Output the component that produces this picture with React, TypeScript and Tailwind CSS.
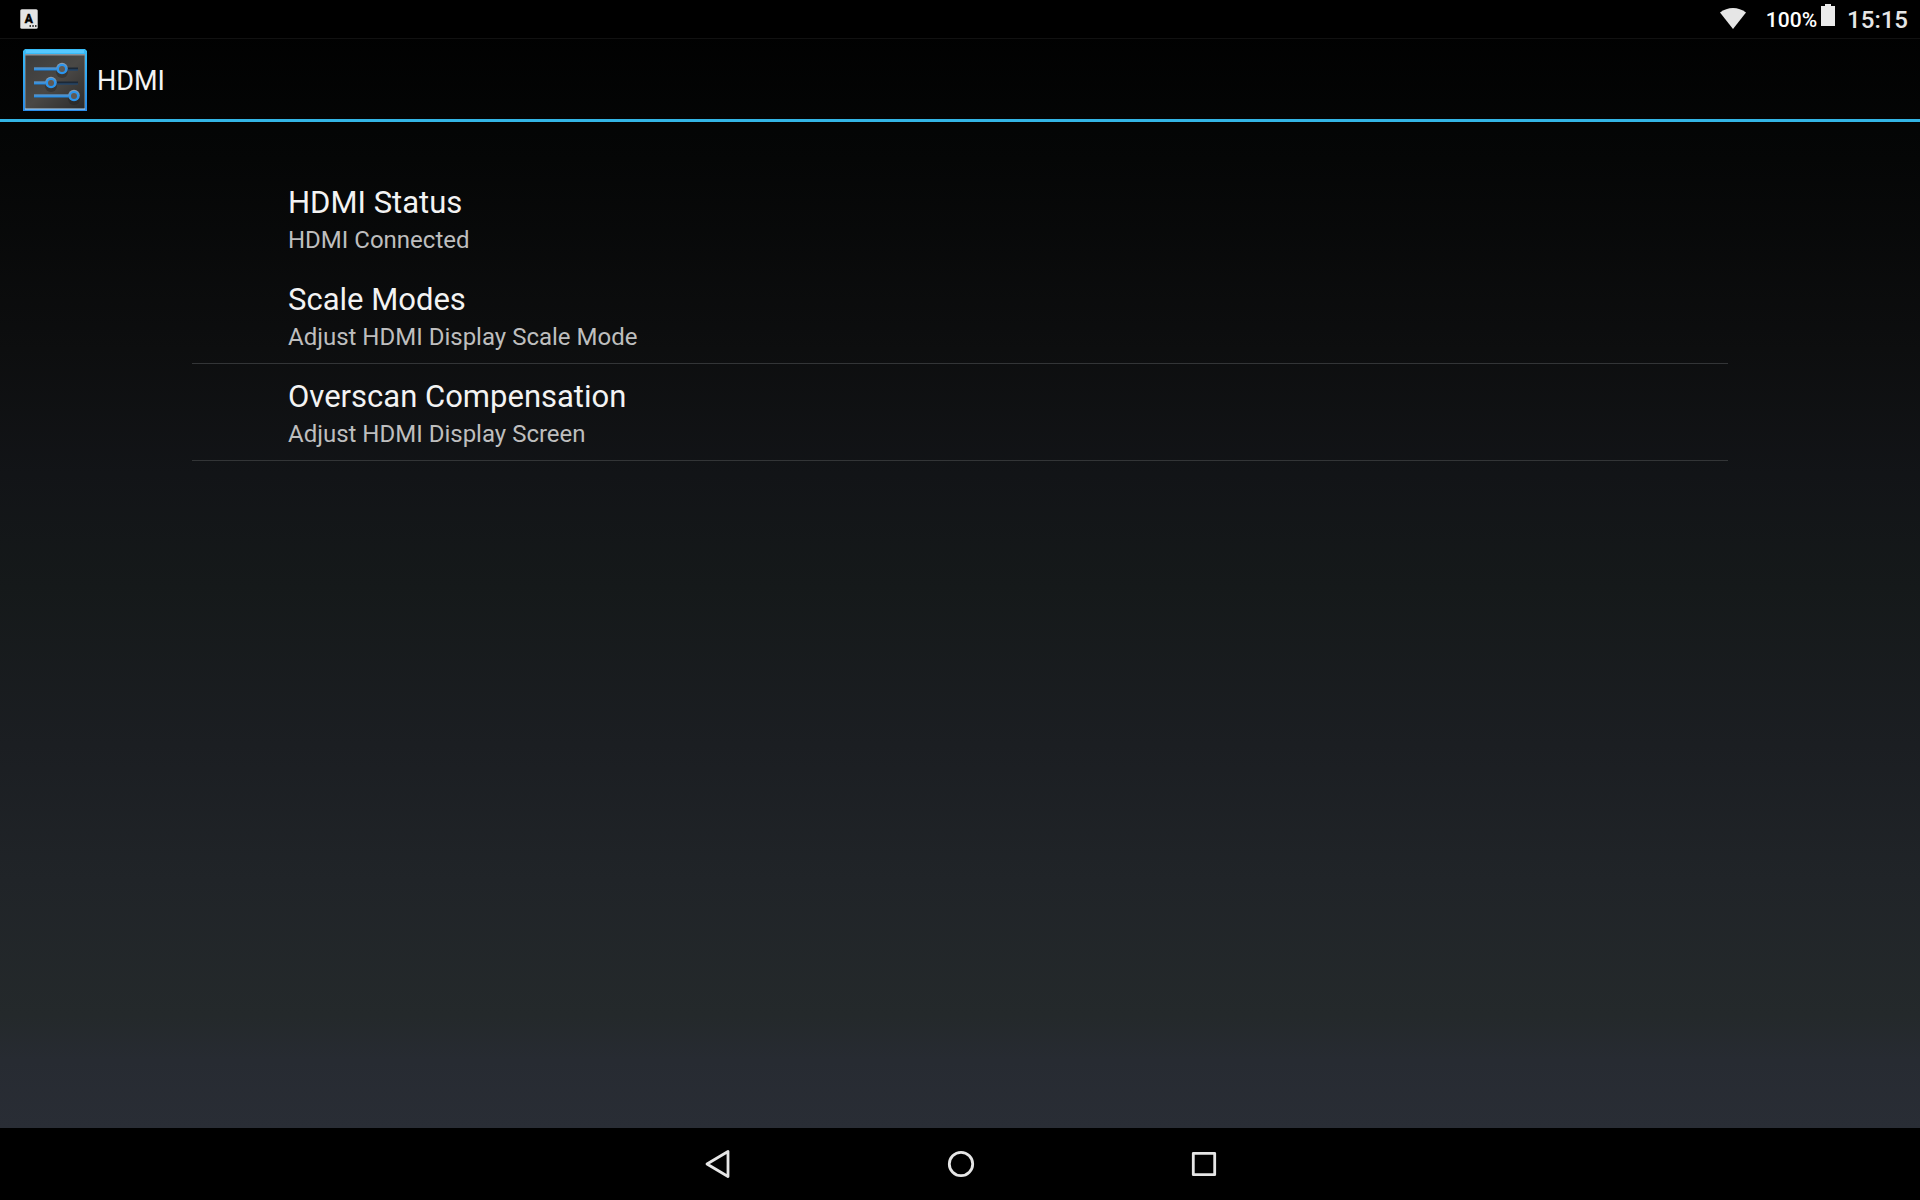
const preferences = [
  { title: 'HDMI Status', summary: 'HDMI Connected', enabled: false },
  { title: 'Scale Modes', summary: 'Adjust HDMI Display Scale Mode', enabled: true },
  { title: 'Overscan Compensation', summary: 'Adjust HDMI Display Screen', enabled: true },
];

const sliders = [
  { x: 39, y: 20 },
  { x: 28, y: 34 },
  { x: 51, y: 47 },
];

const KeyboardIcon = () => (
  <svg className="w-[18px] h-5" viewBox="0 0 18 20" aria-hidden="true">
    <rect x="0.3" y="0.3" width="17.4" height="19.4" rx="1.5" fill="#e4e4e4" />
    <text x="8.7" y="14" textAnchor="middle" fontSize="12" fontWeight="700" fill="#000" stroke="#000" strokeWidth="0.5">
      A
    </text>
    <path d="M9.500 16.300h1.500v1.500H9.500zM12.300 16.300h1.500v1.500h-1.500zM15 16.300h1.500v1.500H15z" fill="#000" />
  </svg>
);

const WifiIcon = () => (
  <svg className="w-[26px] h-[21px]" viewBox="0 0 26 21" aria-hidden="true">
    <path d="M0 4.500C7.500-1.500 18.500-1.500 26 4.500L13 21z" fill="#e6e6e6" />
  </svg>
);

const BatteryIcon = () => (
  <svg className="w-3.5 h-[22px]" viewBox="0 0 14 22" aria-hidden="true">
    <path d="M4 0h6v2h4v20H0V2h4z" fill="#ebebeb" />
  </svg>
);

const SettingsIcon = () => (
  <svg className="w-16 h-[62px]" viewBox="0 0 64 62" aria-hidden="true">
    <defs>
      <linearGradient id="panel" x1="0" y1="0" x2="1" y2="1">
        <stop offset="0" stopColor="#3c3c3c" />
        <stop offset="0.5" stopColor="#4a4845" />
        <stop offset="1" stopColor="#2b2b2b" />
      </linearGradient>
      <linearGradient id="frame" x1="0" y1="0" x2="0" y2="1">
        <stop offset="0" stopColor="#38bdf8" />
        <stop offset="1" stopColor="#2b8be6" />
      </linearGradient>
      <linearGradient id="knob" x1="0" y1="0" x2="0" y2="1">
        <stop offset="0" stopColor="#8b9fb4" />
        <stop offset="1" stopColor="#2489e0" />
      </linearGradient>
    </defs>
    <path d="M2 0h60l2 2v60H0V2z" fill="url(#frame)" />
    <path d="M3 1h58v3H3z" fill="#55c8ff" />
    <path d="M2 5h60v55H2z" fill="#8a9299" />
    <path d="M2.500 6.500h59V60h-59z" fill="url(#panel)" />
    <path d="M2 60h60" stroke="#b3dcff" strokeWidth="1" />
    {sliders.map(({ x, y }) => (
      <g key={y}>
        <path d={`M11 ${y}h44`} stroke="#1c2836" strokeWidth="3" />
        <path d={`M${x} ${y + 1}H55`} stroke="#28527e" strokeWidth="1" />
        <path d={`M11 ${y}H${x}`} stroke="#2f91e4" strokeWidth="3" />
        <path d={`M11 ${y - 1}H${x}`} stroke="#6f92b4" strokeWidth="1" />
        <circle cx={x} cy={y + 3} r="6" fill="#202020" opacity="0.4" />
        <circle cx={x} cy={y - 0.5} r="5.800" fill="url(#knob)" />
        <circle cx={x} cy={y} r="4" fill="none" stroke="#2a96f0" strokeWidth="1.800" />
        <circle cx={x} cy={y} r="3" fill="#5e5a56" />
      </g>
    ))}
  </svg>
);

const StatusBar = () => (
  <div className="flex h-[39px] items-start justify-between border-b border-[#111] bg-black pl-5 pr-3 text-[#e6e6e6]">
    <div className="pt-[9px]">
      <KeyboardIcon />
    </div>
    <div className="flex items-start">
      <div className="pt-2 pr-5">
        <WifiIcon />
      </div>
      <span className="pt-2 pr-1 text-[21px] leading-6 font-medium text-white">100%</span>
      <div className="pt-1 pr-3">
        <BatteryIcon />
      </div>
      <span className="pt-1.5 text-2xl leading-7 font-medium">15:15</span>
    </div>
  </div>
);

const App = () => {
  return (
    <div className="flex min-h-screen flex-col bg-black font-['Roboto',sans-serif]">
      <div className="flex flex-1 flex-col bg-[linear-gradient(to_bottom,#000000_0%,#050606_14%,#0d0e0f_31%,#121417_42%,#15191a_52%,#1b1e22_66%,#202428_78%,#24292b_90%,#272b32_94%,#292d35_100%)]">
        <StatusBar />

        <header className="flex h-[83px] items-center gap-2.5 border-b-3 border-[#33b5e5] pt-0.5 pl-[23px]">
          <SettingsIcon />
          <h1 className="pt-0.5 text-[27px] leading-8 text-[#f3f3f3]">HDMI</h1>
        </header>

        <main className="px-[10%] pt-12">
          <ul>
            {preferences.map(({ title, summary, enabled }) => (
              <li
                key={title}
                className={enabled ? 'border-b border-[#333537]' : 'border-b border-transparent'}
              >
                <button
                  type="button"
                  disabled={!enabled}
                  className="flex h-24 w-full flex-col justify-end px-24 pb-2 text-left"
                >
                  <span className="text-[31px] leading-[38px] text-[#f3f3f3]">{title}</span>
                  <span className="text-2xl leading-9 text-[#bebebe]">{summary}</span>
                </button>
              </li>
            ))}
          </ul>
        </main>
      </div>

      {/* System navigation */}
      <nav className="flex h-[72px] items-center justify-center gap-[195px] bg-black">
        <button type="button" aria-label="Back" className="flex w-12 justify-center">
          <svg className="size-8" viewBox="0 0 32 32" fill="none" stroke="#e6e6e6" strokeWidth="2.800" strokeLinejoin="round">
            <path d="M6 16 27 3.500v25z" />
          </svg>
        </button>
        <button type="button" aria-label="Home" className="flex w-12 justify-center">
          <svg className="size-8" viewBox="0 0 32 32" fill="none" stroke="#e6e6e6" strokeWidth="2.800">
            <circle cx="17" cy="16" r="11.700" />
          </svg>
        </button>
        <button type="button" aria-label="Recent apps" className="flex w-12 justify-center">
          <svg className="size-8" viewBox="0 0 32 32" fill="none" stroke="#e6e6e6" strokeWidth="2.800" strokeLinejoin="round">
            <path d="M6.300 5.300h21.400v21.400H6.300z" />
          </svg>
        </button>
      </nav>
    </div>
  );
};

export default App;
